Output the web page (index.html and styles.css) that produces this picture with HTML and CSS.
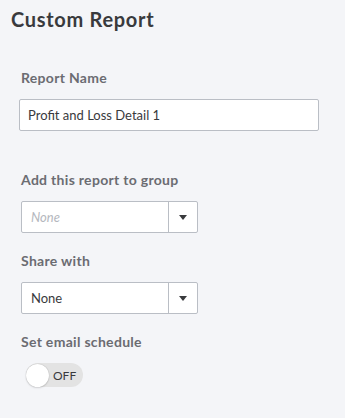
FILE: index.html
```html
<!DOCTYPE html>
<html lang="en">
<head>
  <meta charset="UTF-8">
  <meta name="viewport" content="width=device-width, initial-scale=1.0">
  <title>Custom Report</title>
  <link rel="stylesheet" href="styles.css">
</head>
<body>
  <header>
    <h1>Custom Report</h1>
  </header>

  <main class="report-form">
    <div class="field field-name">
      <label class="field-label" for="report-name">Report Name</label>
      <input class="text-input" id="report-name" type="text" value="Profit and Loss Detail 1">
    </div>

    <div class="field field-group">
      <label class="field-label">Add this report to group</label>
      <div class="select">
        <span class="select-value placeholder">None</span>
        <span class="select-arrow"><span class="caret"></span></span>
      </div>
    </div>

    <div class="field">
      <label class="field-label">Share with</label>
      <div class="select">
        <span class="select-value">None</span>
        <span class="select-arrow"><span class="caret"></span></span>
      </div>
    </div>

    <div class="field">
      <label class="field-label">Set email schedule</label>
      <div class="toggle">
        <span class="toggle-knob"></span>
        <span class="toggle-text">OFF</span>
      </div>
    </div>
  </main>
</body>
</html>
```

FILE: styles.css
```css
body {
  font-family: Lato, "Open Sans", sans-serif;
  color: #393a3d;
  background-color: #f4f5f8;
  margin: 0;
  padding: 7px 11px;
}

h1 {
  font-size: 20px;
  line-height: 24px;
  font-weight: 700;
  letter-spacing: 0.7px;
  margin: 0;
  color: #393a3d;
}

.report-form {
  padding-left: 10px;
}

.field {
  margin-top: 18px;
}

.field-name {
  margin-top: 37px;
}

.field-group {
  margin-top: 39px;
}

.field-label {
  display: block;
  font-size: 14px;
  line-height: 20px;
  font-weight: 700;
  letter-spacing: 0.3px;
  color: #6b6c72;
  margin-bottom: 11px;
}

.text-input {
  display: block;
  box-sizing: border-box;
  width: 300px;
  height: 32px;
  margin-left: -2px;
  padding: 0 8px;
  border: 1px solid #babec5;
  border-radius: 2px;
  background: #fff;
  font-family: Lato, "Open Sans", sans-serif;
  font-size: 13px;
  color: #393a3d;
  outline: none;
}

.select {
  display: flex;
  box-sizing: border-box;
  width: 177px;
  height: 32px;
  border: 1px solid #babec5;
  border-radius: 2px;
  background: #fff;
}

.select-value {
  flex: 1;
  display: flex;
  align-items: center;
  padding-left: 9px;
  font-size: 13px;
  color: #393a3d;
}

.select-value.placeholder {
  font-style: italic;
  color: #b5b8be;
}

.select-arrow {
  width: 28px;
  border-left: 1px solid #babec5;
  display: flex;
  align-items: center;
  justify-content: center;
}

.caret {
  width: 0;
  height: 0;
  border-left: 4px solid transparent;
  border-right: 4px solid transparent;
  border-top: 5px solid #393a3d;
}

.toggle {
  display: flex;
  align-items: center;
  box-sizing: border-box;
  width: 57px;
  height: 24px;
  margin-left: 5px;
  margin-top: 1px;
  border-radius: 12px;
  background: #e3e3e3;
}

.toggle-knob {
  width: 23px;
  height: 23px;
  border-radius: 50%;
  background: #fff;
  box-shadow: 0 0 1px rgba(0, 0, 0, 0.3), 0 1px 2px rgba(0, 0, 0, 0.12);
}

.toggle-text {
  margin-left: 4px;
  font-size: 12px;
  color: #393a3d;
}
```
